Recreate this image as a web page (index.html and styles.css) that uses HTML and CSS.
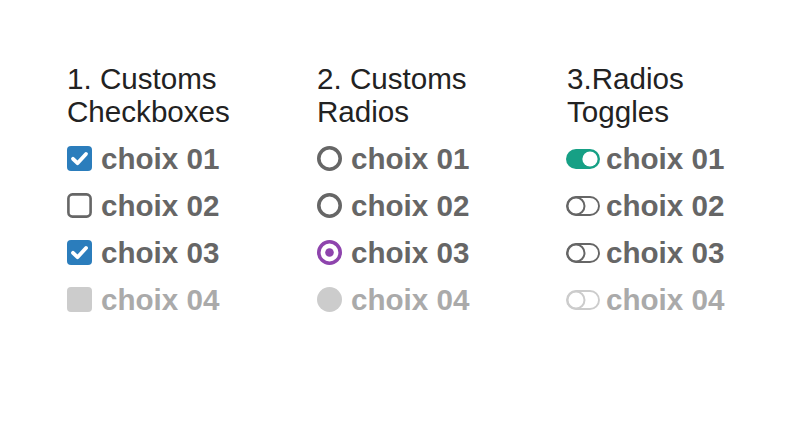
FILE: index.html
```html
<!DOCTYPE html>
<html lang="fr">
<head>
<meta charset="utf-8">
<title>Customs</title>
<link rel="stylesheet" href="styles.css">
</head>
<body>
<div class="wrap">
  <section class="col">
    <h2 class="title">1. Customs<br>Checkboxes</h2>
    <div class="opt"><svg class="ic sq" viewBox="0 0 25 25"><rect x="0" y="0" width="25" height="25" rx="4" fill="#2b7dbc"/><polyline points="6,12.8 10.5,17.2 19,8" fill="none" stroke="#fff" stroke-width="3.8" stroke-linecap="round" stroke-linejoin="round"/></svg><span>choix 01</span></div>
    <div class="opt"><svg class="ic sq" viewBox="0 0 25 25"><rect x="1.4" y="1.4" width="22.2" height="22.2" rx="4" fill="none" stroke="#666" stroke-width="2.6"/></svg><span>choix 02</span></div>
    <div class="opt"><svg class="ic sq" viewBox="0 0 25 25"><rect x="0" y="0" width="25" height="25" rx="4" fill="#2b7dbc"/><polyline points="6,12.8 10.5,17.2 19,8" fill="none" stroke="#fff" stroke-width="3.8" stroke-linecap="round" stroke-linejoin="round"/></svg><span>choix 03</span></div>
    <div class="opt off"><svg class="ic sq" viewBox="0 0 25 25"><rect x="0" y="0" width="25" height="25" rx="4" fill="#ccc"/></svg><span>choix 04</span></div>
  </section>
  <section class="col">
    <h2 class="title">2. Customs<br>Radios</h2>
    <div class="opt"><svg class="ic sq" viewBox="0 0 25 25"><circle cx="12.5" cy="12.5" r="10.7" fill="none" stroke="#666" stroke-width="3.6"/></svg><span>choix 01</span></div>
    <div class="opt"><svg class="ic sq" viewBox="0 0 25 25"><circle cx="12.5" cy="12.5" r="10.7" fill="none" stroke="#666" stroke-width="3.6"/></svg><span>choix 02</span></div>
    <div class="opt"><svg class="ic sq" viewBox="0 0 25 25"><circle cx="12.5" cy="12.5" r="10.7" fill="none" stroke="#8e44ad" stroke-width="3.6"/><circle cx="12.5" cy="12.5" r="4.3" fill="#8e44ad"/></svg><span>choix 03</span></div>
    <div class="opt off"><svg class="ic sq" viewBox="0 0 25 25"><circle cx="12.5" cy="12.5" r="12.5" fill="#ccc"/></svg><span>choix 04</span></div>
  </section>
  <section class="col">
    <h2 class="title">3.Radios<br>Toggles</h2>
    <div class="opt"><svg class="ic tg" viewBox="0 0 34 20"><rect x="0" y="0" width="34" height="20" rx="10" fill="#16a085"/><circle cx="24" cy="10" r="7.6" fill="#fff"/></svg><span>choix 01</span></div>
    <div class="opt"><svg class="ic tg" viewBox="0 0 34 20"><rect x="1" y="1" width="32" height="18" rx="9" fill="none" stroke="#666" stroke-width="1.9"/><circle cx="10" cy="10" r="8.5" fill="none" stroke="#666" stroke-width="2"/></svg><span>choix 02</span></div>
    <div class="opt"><svg class="ic tg" viewBox="0 0 34 20"><rect x="1" y="1" width="32" height="18" rx="9" fill="none" stroke="#666" stroke-width="1.9"/><circle cx="10" cy="10" r="8.5" fill="none" stroke="#666" stroke-width="2"/></svg><span>choix 03</span></div>
    <div class="opt off"><svg class="ic tg" viewBox="0 0 34 20"><rect x="1" y="1" width="32" height="18" rx="9" fill="none" stroke="#ccc" stroke-width="1.9"/><circle cx="10" cy="10" r="8.5" fill="none" stroke="#ccc" stroke-width="2"/></svg><span>choix 04</span></div>
  </section>
</div>
</body>
</html>
```

FILE: styles.css
```css
html, body {
  margin: 0;
  padding: 0;
  background: #fff;
}
body {
  font-family: "Liberation Sans", Arial, sans-serif;
}
.wrap {
  display: flex;
  padding: 62px 0 0 67px;
}
.col {
  flex: none;
  width: 250px;
}
.title {
  margin: 0 0 7px 0;
  font-size: 29.6px;
  font-weight: normal;
  line-height: 33px;
  color: #222;
}
.opt {
  display: flex;
  align-items: center;
  height: 47px;
  font-size: 29.6px;
  font-weight: bold;
  color: #666;
}
.opt.off {
  color: #aaa;
}
.ic {
  display: block;
  flex: none;
  margin-right: 9px;
}
.sq {
  width: 25px;
  height: 25px;
}
.tg {
  width: 34px;
  height: 20px;
  margin-left: -1px;
  margin-right: 6px;
}
```
